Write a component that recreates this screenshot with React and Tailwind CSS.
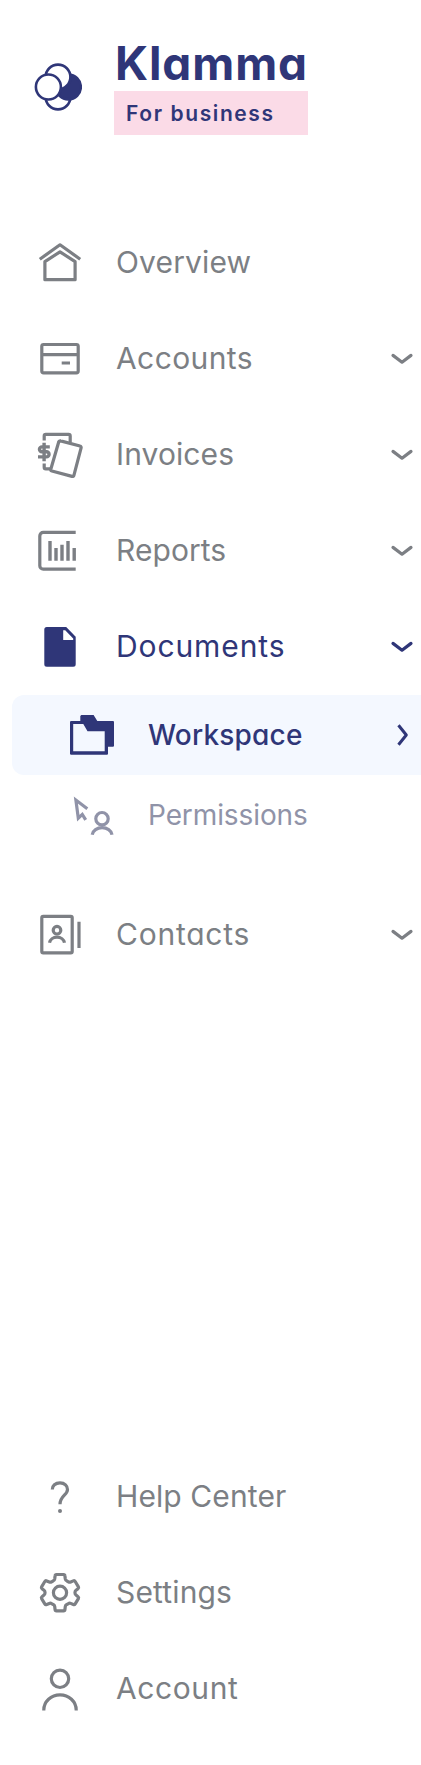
import React from "react";

const Icon = ({ children }) => (
  <svg viewBox="0 0 48 48" className="size-12 shrink-0 overflow-visible" fill="none" stroke="currentColor" strokeWidth="3.2" strokeLinejoin="round">
    {children}
  </svg>
);

const icons = {
  overview: (
    <Icon>
      <path d="M3.8 21.2 24 6.8l20.2 14.4" />
      <path d="M8.9 23.7 24 13.8l15.1 9.9v18H8.9z" />
    </Icon>
  ),
  accounts: (
    <Icon>
      <rect x="5.8" y="10.5" width="36.4" height="28.4" rx="1.8" />
      <path d="M5.8 20.7h36.4M25.7 29H34" />
    </Icon>
  ),
  invoices: (
    <Icon>
      <path d="M8.2 10.5V6a1.6 1.6 0 0 1 1.6-1.6h22.8A1.6 1.6 0 0 1 34.2 6v6.3M8.2 33.4v3.9a1.6 1.6 0 0 0 1.6 1.6h5" />
      <path d="M24.6 10.9 44 16a1.5 1.5 0 0 1 1.1 1.9L37.9 45.3a1.5 1.5 0 0 1-1.9 1.1L15.9 41a1.5 1.5 0 0 1-1.1-1.8l7.9-27.2a1.5 1.5 0 0 1 1.9-1.1z" />
      <path strokeWidth="3.4" d="M13.8 16.9H5.9a2.4 2.4 0 0 0 0 4.9h4.6a2.5 2.5 0 0 1 0 5.1H2M8.1 12.7v18.5" />
    </Icon>
  ),
  reports: (
    <Icon>
      <path d="M39.7 6.4H7.3a3.5 3.5 0 0 0-3.5 3.5v29.8a3.5 3.5 0 0 0 3.5 3.5h32.4" />
      <path d="M14 15v19.7M20 22v12.7M26 18.7v16M32 15v19.7M38.2 22v12.7" strokeWidth="3.4" />
    </Icon>
  ),
  documents: (
    <Icon>
      <path fill="currentColor" stroke="none" fillRule="evenodd" d="M10.8 5h19.4l9.5 9.7v27.5a2.5 2.5 0 0 1-2.5 2.5H10.8a2.5 2.5 0 0 1-2.5-2.5V7.5A2.5 2.5 0 0 1 10.8 5zM27.2 8.3V18h10v-1.6l-8-8.1z" />
    </Icon>
  ),
  workspace: (
    <Icon>
      <path fill="currentColor" stroke="none" fillRule="evenodd" d="M2.8 10h9.5V5l1-1h12.3l3.7 6h16l.7.7v24.3l-.7.7H40v7.3l-.7.7H2.8L2 43V10.7zM5.2 13v27.3h31.5V20.2H19.5L15.3 13z" />
    </Icon>
  ),
  permissions: (
    <Icon>
      <path strokeLinejoin="miter" d="M19.3 17.8 7.9 9.1l2.4 18.1 4-3.8 3.4 5.4" />
      <circle cx="34" cy="27.7" r="6.2" />
      <path d="M24.2 43.7a10 8.2 0 0 1 19.8 0" />
    </Icon>
  ),
  contacts: (
    <Icon>
      <rect x="5.8" y="6.4" width="30.4" height="36.4" rx="1.4" />
      <circle cx="21" cy="20.2" r="3.8" />
      <path d="M13.5 32.8a7.6 6.8 0 0 1 15 0M43 11.7V38" />
    </Icon>
  ),
  help: (
    <Icon>
      <path d="M16.3 17.4c0-3.5 3-6.6 7.7-6.6s7.5 3.2 7.5 6.6c0 5.7-7.5 6-7.5 14.8" />
      <circle cx="24" cy="39" r="2" fill="currentColor" stroke="none" />
    </Icon>
  ),
  settings: (
    <Icon>
      <circle cx="24" cy="24.7" r="6.6" />
      <path d="M20.4 6.5h7.2q1.2 0 1.3 1.2l.4 3.3q.2 1.3 1.4 1.8l1.7 1q1.1.7 2.3.2l2.6-1.1q1.2-.5 1.9.6l3.2 5.3q.6 1.1-.4 1.9l-2 1.6q-1 .8-1 2v.8q0 1.2 1 2l2 1.6q1 .8.4 1.9l-3.2 5.3q-.7 1.1-1.9.6l-2.6-1.1q-1.2-.5-2.3.2l-1.7 1q-1.2.5-1.4 1.8l-.4 3.3q-.1 1.2-1.3 1.2h-7.2q-1.2 0-1.3-1.2l-.4-3.3q-.2-1.3-1.4-1.8l-1.7-1q-1.1-.7-2.3-.2l-2.6 1.1q-1.2.5-1.9-.6l-3.2-5.3q-.6-1.1.4-1.9l2-1.6q1-.8 1-2v-.8q0-1.2-1-2l-2-1.6q-1-.8-.4-1.9l3.2-5.3q.7-1.1 1.9-.6l2.6 1.1q1.2.5 2.3-.2l1.7-1q1.2-.5 1.4-1.8l.4-3.3q.1-1.2 1.3-1.2z" />
    </Icon>
  ),
  account: (
    <Icon>
      <circle cx="24" cy="14.8" r="8.7" />
      <path d="M7.8 46.5V46a16.2 15.2 0 0 1 32.4 0v.5" />
    </Icon>
  ),
};

const Chevron = () => (
  <svg viewBox="0 0 24 24" className="mt-0.5 size-6 shrink-0" fill="none" stroke="currentColor" strokeWidth="3.2" strokeLinecap="round" strokeLinejoin="round">
    <path d="m3 8.4 9 6.8 9-6.8" />
  </svg>
);

const Item = ({ icon, label, tracking, chevron, color = "text-[#7c7f84]" }) => (
  <a className={`flex h-24 items-center pl-9 pr-[7px] ${color}`}>
    {icons[icon]}
    <span className={`ml-8 grow whitespace-nowrap text-[30px] leading-none ${tracking}`}>{label}</span>
    {chevron && <Chevron />}
  </a>
);

export default function App() {
  return (
    <aside className="flex h-[1765px] w-[421px] flex-col overflow-hidden bg-white font-['Inter',sans-serif] font-[370] [font-feature-settings:'cv11']">
      <header className="flex h-[214px] items-start pl-[34px] text-[#2f3678]">
        <svg viewBox="0 0 48 48" className="mt-[62.5px] size-12" fill="#fff" stroke="currentColor" strokeWidth="2.6">
          <circle cx="24" cy="34" r="12.4" />
          <circle cx="34.4" cy="24" r="12.4" fill="currentColor" />
          <circle cx="24" cy="14" r="12.4" />
          <circle cx="14.4" cy="24" r="12.5" />
        </svg>
        <div className="ml-8 mt-[38px] w-[194px]">
          <div className="h-[53px] whitespace-nowrap pl-px text-[46px] font-[670] leading-[50px] tracking-[0.9px]">Klamma</div>
          <div className="flex h-11 items-center bg-[#fbdbe7] pl-3 pt-px text-[21px] font-[640] tracking-[1.6px]">For business</div>
        </div>
      </header>
      <nav className="flex flex-col">
        <Item icon="overview" label="Overview" tracking="tracking-[0.15px]" />
        <Item icon="accounts" label="Accounts" tracking="tracking-[0.4px]" chevron />
        <Item icon="invoices" label="Invoices" tracking="tracking-[0.1px]" chevron />
        <Item icon="reports" label="Reports" tracking="tracking-[0.05px]" chevron />
        <Item icon="documents" label="Documents" tracking="tracking-[0.9px]" chevron color="text-[#2f3678]" />
        <div className="mb-[31px] mt-px flex flex-col pl-3">
          <a className="flex h-20 items-center rounded-l-xl bg-[#f4f8ff] pl-14 pr-[7px] text-[#2f3678]">
            {icons.workspace}
            <span className="ml-8 grow text-[28px] font-medium leading-none tracking-[0.2px]">Workspace</span>
            <svg viewBox="0 0 24 24" className="size-6" fill="none" stroke="currentColor" strokeWidth="3" strokeLinejoin="round">
              <path d="m8.5 2.2 7.8 9.8-7.8 9.8" />
            </svg>
          </a>
          <a className="flex h-20 items-center pl-14 text-[#9093a8]">
            {icons.permissions}
            <span className="ml-8 text-[28px] leading-none tracking-[-0.1px]">Permissions</span>
          </a>
        </div>
        <Item icon="contacts" label="Contacts" tracking="tracking-[0.75px]" chevron />
      </nav>
      <nav className="mb-[29px] mt-auto flex flex-col">
        <Item icon="help" label="Help Center" tracking="tracking-[0.1px]" />
        <Item icon="settings" label="Settings" tracking="tracking-[0.15px]" />
        <Item icon="account" label="Account" tracking="tracking-[0.6px]" />
      </nav>
    </aside>
  );
}
